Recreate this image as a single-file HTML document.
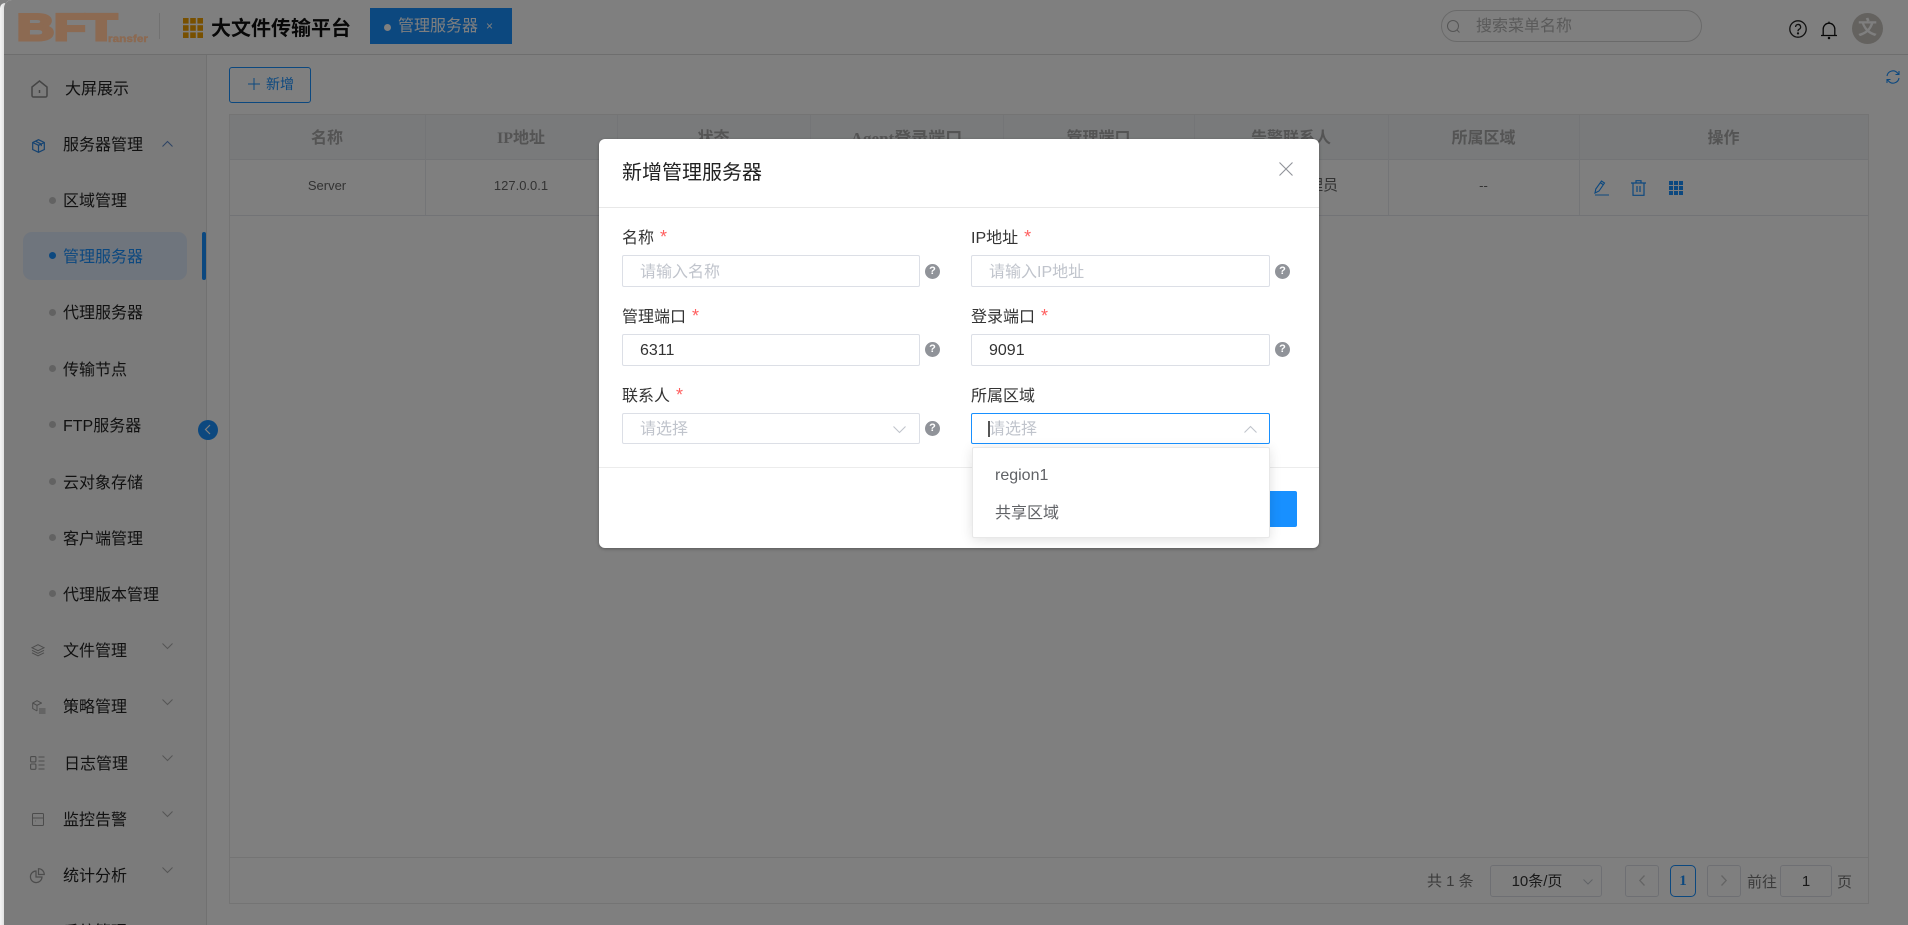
<!DOCTYPE html>
<html><head><meta charset="utf-8"><style>
*{box-sizing:border-box}
html,body{margin:0;padding:0;width:1908px;height:925px;overflow:hidden;background:#808080}
body{font-family:"Liberation Sans","Noto Sans CJK SC",sans-serif;position:relative}
.a{position:absolute;white-space:nowrap}
#app{position:absolute;left:4px;top:0;width:1904px;height:925px;overflow:hidden;background:#fff;border-top-left-radius:8px}
#root{position:absolute;left:-4px;top:0;width:1908px;height:925px}
.m{font-size:16px;color:#222;line-height:24px;height:24px}
.d{position:absolute;left:49px;width:7px;height:7px;border-radius:50%;background:#c4c4c4}
.th{position:absolute;top:117px;height:44px;text-align:center;font:bold 16px/44px "Liberation Serif","Noto Sans CJK SC",sans-serif;color:#a9a9a9}
.v{position:absolute;width:1px;background:#e9ebee}
.td{position:absolute;top:170px;height:32px;line-height:32px;text-align:center;font-size:13px;color:#666}
.lb{position:absolute;font-size:16px;color:#333;line-height:24px;height:24px;white-space:nowrap}
.lb i{font-style:normal;color:#ff5f5f;font-size:18px;margin-left:6px}
.in{position:absolute;width:298px;height:32px;border:1px solid #dcdfe6;border-radius:2px;background:#fff;font-size:16px;line-height:33px;padding-left:17px;color:#c0c4cc}
.hp{position:absolute;width:15px;height:15px;border-radius:50%;background:#909399;color:#fff;font:bold 11px/15px "Liberation Sans",sans-serif;text-align:center}
svg{position:absolute;display:block;overflow:visible}
.pg{position:absolute;top:865px;height:32px;border:1px solid #dcdfe6;border-radius:3px;background:#fff}
</style></head><body>
<div class="a" style="left:0;top:3px;width:5px;height:922px;background:linear-gradient(90deg,#f4f4f4,#dedede);border-top-left-radius:6px"></div>
<div id="app"><div id="root">

<!-- header -->
<div class="a" style="left:0;top:0;width:1908px;height:55px;background:#fff;border-bottom:1px solid #dcdcdc"></div>
<div class="a" style="left:159px;top:13px;width:1px;height:26px;background:#e2e2e2"></div>
<svg style="left:183px;top:18px" width="20" height="20" viewBox="0 0 20 20" fill="#f0a000"><rect width="5.6" height="5.6"/><rect x="7.2" width="5.6" height="5.6"/><rect x="14.4" width="5.6" height="5.6"/><rect y="7.2" width="5.6" height="5.6"/><rect x="7.2" y="7.2" width="5.6" height="5.6"/><rect x="14.4" y="7.2" width="5.6" height="5.6"/><rect y="14.4" width="5.6" height="5.6"/><rect x="7.2" y="14.4" width="5.6" height="5.6"/><rect x="14.4" y="14.4" width="5.6" height="5.6"/></svg>
<div class="a" style="left:211px;top:14px;font-size:20px;font-weight:bold;color:#111;line-height:30px">大文件传输平台</div>
<div class="a" style="left:370px;top:8px;width:142px;height:36px;background:#1890ff"></div>
<div class="a" style="left:384px;top:24px;width:7px;height:7px;border-radius:50%;background:#fff"></div>
<div class="a" style="left:398px;top:15px;font-size:16px;color:#fff;line-height:24px">管理服务器</div>
<div class="a" style="left:486px;top:16px;font-size:12px;color:#fff;line-height:20px">×</div>

<div class="a" style="left:1441px;top:10px;width:261px;height:32px;border:1px solid #d4d4d4;border-radius:16px;background:#fff"></div>
<svg style="left:1447px;top:20px" width="13" height="13" viewBox="0 0 13 13" fill="none" stroke="#aaa" stroke-width="1"><circle cx="6" cy="6" r="5.5"/><path d="M10 10l2.5 2.5"/></svg>
<div class="a" style="left:1476px;top:15px;font-size:16px;color:#b4b4b4;line-height:24px">搜索菜单名称</div>
<svg style="left:1789px;top:20px" width="18" height="18" viewBox="0 0 18 18" fill="none" stroke="#222" stroke-width="1.3"><circle cx="9" cy="9" r="8.2"/><path d="M6.6 7a2.5 2.5 0 1 1 3.6 2.2c-.9.5-1.2 1-1.2 2"/><circle cx="9" cy="13.4" r=".5" fill="#222"/></svg>
<svg style="left:1820px;top:21px" width="18" height="18" viewBox="0 0 18 18" fill="none" stroke="#111" stroke-width="1.3"><path d="M1 14.5h16M3.2 14.5V8a5.8 5.8 0 0 1 11.6 0v6.5M9 .6v1.6"/><circle cx="9" cy="17" r=".6" fill="#111"/></svg>
<div class="a" style="left:1852px;top:13px;width:31px;height:31px;border-radius:50%;background:#c8c4be;color:#fff;font-size:19px;font-weight:bold;text-align:center;line-height:31px">文</div>

<!-- sidebar -->
<div class="a" style="left:0;top:55px;width:207px;height:870px;background:#f6f6f6;border-right:1px solid #e2e2e2"></div>
<div class="a" style="left:23px;top:232px;width:164px;height:48px;border-radius:9px;background:#dfeafa"></div>
<div class="a" style="left:202px;top:232px;width:4px;height:48px;border-radius:2px;background:#1890ff"></div>

<svg style="left:31px;top:80px" width="17" height="18" viewBox="0 0 17 18" fill="none" stroke="#8a8a8a" stroke-width="1.5"><path d="M1 7l7.5-6L16 7v8.5a1.5 1.5 0 0 1-1.5 1.5h-12A1.5 1.5 0 0 1 1 15.500z"/><path d="M8.500 10v3"/></svg>
<div class="a m" style="left:65px;top:78px">大屏展示</div>
<svg style="left:32px;top:139px" width="13" height="14" viewBox="0 0 13 14" fill="none" stroke="#2a85e0" stroke-width="1.2"><path d="M6.500.7l5.800 2.800v7l-5.800 2.800-5.800-2.800v-7zM.7 3.500l5.800 2.800 5.800-2.800M6.500 6.300v7.500M3.500 2.200l5.800 2.900v2"/></svg>
<div class="a m" style="left:63px;top:134px">服务器管理</div>
<svg style="left:162px;top:141px" width="11" height="6" viewBox="0 0 11 6" fill="none" stroke="#5a86c8" stroke-width="1"><path d="M.5 5.500l5-5 5 5"/></svg>

<div class="d" style="top:197px"></div><div class="a m" style="left:63px;top:190px">区域管理</div>
<div class="d" style="top:252px;background:#1890ff"></div><div class="a m" style="left:63px;top:246px;color:#1890ff">管理服务器</div>
<div class="d" style="top:309px"></div><div class="a m" style="left:63px;top:302px">代理服务器</div>
<div class="d" style="top:365px"></div><div class="a m" style="left:63px;top:359px">传输节点</div>
<div class="d" style="top:421px"></div><div class="a m" style="left:63px;top:415px">FTP服务器</div>
<div class="d" style="top:478px"></div><div class="a m" style="left:63px;top:472px">云对象存储</div>
<div class="d" style="top:534px"></div><div class="a m" style="left:63px;top:528px">客户端管理</div>
<div class="d" style="top:590px"></div><div class="a m" style="left:63px;top:584px">代理版本管理</div>

<svg style="left:31px;top:644px" width="14" height="13" viewBox="0 0 14 13" fill="none" stroke="#999" stroke-width="1"><path d="M7 .7l6 3-6 3-6-3zM1 6.300l6 3 6-3M1 8.800l6 3 6-3"/></svg>
<div class="a m" style="left:63px;top:640px">文件管理</div>
<svg style="left:32px;top:700px" width="14" height="14" viewBox="0 0 14 14" fill="none" stroke="#999" stroke-width="1"><path d="M9.500 3.500V3L5 .7.700 3v5.500L5 11M.7 3L5 5.300 9.500 3M5 5.300V11M7 9h6.500M7 11h6.500M7 13h6.500"/></svg>
<div class="a m" style="left:63px;top:696px">策略管理</div>
<svg style="left:30px;top:756px" width="15" height="14" viewBox="0 0 15 14" fill="none" stroke="#999" stroke-width="1.1"><rect x=".6" y=".6" width="5.300" height="5.300" rx="1"/><rect x=".6" y="8" width="5.300" height="5.300" rx="1"/><path d="M8.500 1h6M8.500 5h6M8.500 9h6M8.500 13h6"/></svg>
<div class="a m" style="left:64px;top:753px">日志管理</div>
<svg style="left:32px;top:813px" width="12" height="13" viewBox="0 0 12 13" fill="none" stroke="#999" stroke-width="1"><rect x=".5" y=".5" width="11" height="12" rx="1"/><path d="M.5 5h11M3 8h.5"/></svg>
<div class="a m" style="left:63px;top:809px">监控告警</div>
<svg style="left:30px;top:868px" width="15" height="15" viewBox="0 0 15 15" fill="none" stroke="#999" stroke-width="1.200"><path d="M6 3a5.800 5.800 0 1 0 6 6H6z"/><path d="M8.500.7a5.800 5.800 0 0 1 5.800 5.800H8.500z"/></svg>
<div class="a m" style="left:63px;top:865px">统计分析</div>
<div class="a m" style="left:63px;top:921px">系统管理</div>
<svg style="left:162px;top:643px" width="11" height="6" viewBox="0 0 11 6" fill="none" stroke="#aaa" stroke-width="1"><path d="M.5.500l5 5 5-5"/></svg>
<svg style="left:162px;top:699px" width="11" height="6" viewBox="0 0 11 6" fill="none" stroke="#aaa" stroke-width="1"><path d="M.5.500l5 5 5-5"/></svg>
<svg style="left:162px;top:755px" width="11" height="6" viewBox="0 0 11 6" fill="none" stroke="#aaa" stroke-width="1"><path d="M.5.500l5 5 5-5"/></svg>
<svg style="left:162px;top:811px" width="11" height="6" viewBox="0 0 11 6" fill="none" stroke="#aaa" stroke-width="1"><path d="M.5.500l5 5 5-5"/></svg>
<svg style="left:162px;top:867px" width="11" height="6" viewBox="0 0 11 6" fill="none" stroke="#aaa" stroke-width="1"><path d="M.5.500l5 5 5-5"/></svg>
<div class="a" style="left:198px;top:420px;width:20px;height:20px;border-radius:50%;background:#1890ff"></div>
<svg style="left:204px;top:424px" width="7" height="11" viewBox="0 0 7 11" fill="none" stroke="#fff" stroke-width="1.200"><path d="M6 1L1.500 5.500 6 10"/></svg>

<!-- toolbar -->
<div class="a" style="left:229px;top:67px;width:82px;height:36px;border:1px solid #1890ff;border-radius:3px;background:#fff"></div>
<svg style="left:248px;top:78px" width="12" height="12" viewBox="0 0 12 12" stroke="#1890ff" stroke-width="1"><path d="M6 0v12M0 6h12"/></svg>
<div class="a" style="left:266px;top:74px;font-size:14px;color:#1890ff;line-height:20px">新增</div>
<svg style="left:1886px;top:70px" width="14" height="14" viewBox="0 0 14 14" fill="none" stroke="#1890ff" stroke-width="1.100"><path d="M1 6a6 6 0 0 1 10.500-3l1.500 1.500M13 1v3.500H9.500M13 8a6 6 0 0 1-10.500 3L1 9.500M1 13V9.500h3.500"/></svg>

<!-- table -->
<div class="a" style="left:229px;top:114px;width:1640px;height:790px;border:1px solid #e8e8e8;background:#fff"></div>
<div class="a" style="left:230px;top:115px;width:1638px;height:45px;background:#f2f4f7;border-bottom:1px solid #e6e8ec"></div>
<div class="a" style="left:230px;top:215px;width:1638px;height:1px;background:#e4e7ec"></div>
<div class="v" style="left:425px;top:115px;height:100px"></div>
<div class="v" style="left:617px;top:115px;height:100px"></div>
<div class="v" style="left:810px;top:115px;height:100px"></div>
<div class="v" style="left:1003px;top:115px;height:100px"></div>
<div class="v" style="left:1194px;top:115px;height:100px"></div>
<div class="v" style="left:1388px;top:115px;height:100px"></div>
<div class="v" style="left:1579px;top:115px;height:100px"></div>
<div class="th" style="left:229px;width:196px">名称</div>
<div class="th" style="left:425px;width:192px">IP地址</div>
<div class="th" style="left:617px;width:193px">状态</div>
<div class="th" style="left:810px;width:193px;font-size:17px">Agent登录端口</div>
<div class="th" style="left:1003px;width:191px">管理端口</div>
<div class="th" style="left:1194px;width:194px">告警联系人</div>
<div class="th" style="left:1388px;width:191px">所属区域</div>
<div class="th" style="left:1579px;width:289px">操作</div>
<div class="td" style="left:229px;width:196px">Server</div>
<div class="td" style="left:425px;width:192px">127.0.0.1</div>
<div class="td" style="left:1240px;width:98px;text-align:right;font-size:15px">系统管理员</div>
<div class="td" style="left:1388px;width:191px">--</div>
<svg style="left:1594px;top:180px" width="16" height="16" viewBox="0 0 16 16" fill="none" stroke="#1890ff" stroke-width="1.100"><path d="M1 13l.8-4L7.500 1l3 2-5.500 8zM1 15h14M6 2.500l3 2"/></svg>
<svg style="left:1631px;top:180px" width="15" height="16" viewBox="0 0 15 16" fill="none" stroke="#1890ff" stroke-width="1.200"><path d="M0 3h15M5 3V.7h5V3M2 3v12.300h11V3M6 6v6M9 6v6"/></svg>
<svg style="left:1669px;top:181px" width="14" height="14" viewBox="0 0 14 14" fill="#1890ff"><rect width="4" height="4"/><rect x="5" width="4" height="4"/><rect x="10" width="4" height="4"/><rect y="5" width="4" height="4"/><rect x="5" y="5" width="4" height="4"/><rect x="10" y="5" width="4" height="4"/><rect y="10" width="4" height="4"/><rect x="5" y="10" width="4" height="4"/><rect x="10" y="10" width="4" height="4"/></svg>

<!-- pagination -->
<div class="a" style="left:230px;top:857px;width:1638px;height:1px;background:#e8e8e8"></div>
<div class="a" style="left:1427px;top:871px;font-size:15px;color:#777;line-height:22px">共 1 条</div>
<div class="pg" style="left:1490px;width:112px"></div>
<div class="a" style="left:1490px;top:871px;width:94px;text-align:center;font-size:15px;color:#333;line-height:22px">10条/页</div>
<svg style="left:1583px;top:879px" width="10" height="6" viewBox="0 0 10 6" fill="none" stroke="#c0c4cc"><path d="M.5.500L5 5 9.500.500"/></svg>
<div class="pg" style="left:1625px;width:34px"></div>
<svg style="left:1639px;top:875px" width="6" height="11" viewBox="0 0 6 11" fill="none" stroke="#c8c8c8" stroke-width="1.300"><path d="M5.500.5L.8 5.500l4.700 5"/></svg>
<div class="pg" style="left:1670px;width:26px;border-color:#1890ff;border-radius:5px;color:#1890ff;font:bold 15px/30px 'Liberation Serif',serif;text-align:center">1</div>
<div class="pg" style="left:1707px;width:34px"></div>
<svg style="left:1721px;top:875px" width="6" height="11" viewBox="0 0 6 11" fill="none" stroke="#c8c8c8" stroke-width="1.300"><path d="M.5.500l4.700 5-4.700 5"/></svg>
<div class="a" style="left:1747px;top:872px;font-size:15px;color:#777;line-height:22px">前往</div>
<div class="pg" style="left:1780px;width:52px;text-align:center;font-size:15px;line-height:31px;color:#333">1</div>
<div class="a" style="left:1837px;top:872px;font-size:15px;color:#777;line-height:22px">页</div>

</div></div>

<!-- mask -->
<div class="a" style="left:4px;top:0;width:1904px;height:925px;background:rgba(0,0,0,.5);border-top-left-radius:8px"></div>

<!-- logo over mask -->
<svg style="left:0;top:0" width="160" height="50" viewBox="0 0 160 50">
<text x="17" y="40" font-family="Liberation Sans" font-weight="bold" font-size="37" fill="#8c6a52" stroke="#8c6a52" stroke-width="3" stroke-linejoin="miter" textLength="100" lengthAdjust="spacingAndGlyphs">BFT</text>
<text x="108" y="42" font-family="Liberation Sans" font-weight="bold" font-size="10" fill="#8c6a52" stroke="#8c6a52" stroke-width=".4" textLength="40" lengthAdjust="spacingAndGlyphs">ransfer</text>
</svg>

<!-- dialog -->
<div class="a" style="left:599px;top:139px;width:720px;height:409px;background:#fff;border-radius:6px;box-shadow:0 1px 3px rgba(0,0,0,.3)"></div>
<div class="a" style="left:622px;top:158px;font-size:20px;color:#222;line-height:30px">新增管理服务器</div>
<svg style="left:1279px;top:162px" width="14" height="14" viewBox="0 0 14 14" stroke="#909399" stroke-width="1.100"><path d="M.5.500l13 13M13.500.5l-13 13"/></svg>
<div class="a" style="left:599px;top:207px;width:720px;height:1px;background:#e8e8e8"></div>

<div class="lb" style="left:622px;top:225px">名称<i>*</i></div>
<div class="in" style="left:622px;top:255px">请输入名称</div>
<div class="hp" style="left:925px;top:264px">?</div>
<div class="lb" style="left:971px;top:225px">IP地址<i>*</i></div>
<div class="in" style="left:971px;top:255px;width:299px">请输入IP地址</div>
<div class="hp" style="left:1275px;top:264px">?</div>

<div class="lb" style="left:622px;top:304px">管理端口<i>*</i></div>
<div class="in" style="left:622px;top:334px;color:#333;line-height:32px">6311</div>
<div class="hp" style="left:925px;top:342px">?</div>
<div class="lb" style="left:971px;top:304px">登录端口<i>*</i></div>
<div class="in" style="left:971px;top:334px;width:299px;color:#333;line-height:32px">9091</div>
<div class="hp" style="left:1275px;top:342px">?</div>

<div class="lb" style="left:622px;top:383px">联系人<i>*</i></div>
<div class="in" style="left:622px;top:413px;height:31px;line-height:31px">请选择</div>
<svg style="left:893px;top:426px" width="13" height="7" viewBox="0 0 13 7" fill="none" stroke="#c0c4cc" stroke-width="1.100"><path d="M.5.500l6 6 6-6"/></svg>
<div class="hp" style="left:925px;top:421px">?</div>
<div class="lb" style="left:971px;top:385px">所属区域</div>
<div class="in" style="left:971px;top:413px;width:299px;height:31px;line-height:31px;border-color:#1890ff">请选择</div>
<div class="a" style="left:988px;top:421px;width:2px;height:16px;background:#555"></div>
<svg style="left:1244px;top:426px" width="13" height="7" viewBox="0 0 13 7" fill="none" stroke="#c0c4cc" stroke-width="1.100"><path d="M.5 6.500l6-6 6 6"/></svg>

<div class="a" style="left:599px;top:467px;width:720px;height:1px;background:#ececec"></div>
<div class="a" style="left:1240px;top:491px;width:57px;height:36px;background:#1890ff;border-radius:2px"></div>

<div class="a" style="left:972px;top:447px;width:298px;height:91px;background:#fff;border:1px solid #e8e8e8;border-radius:2px;box-shadow:0 2px 12px rgba(0,0,0,.12)"></div>
<div class="a" style="left:995px;top:464px;font-size:16px;color:#606266;line-height:24px">region1</div>
<div class="a" style="left:995px;top:502px;font-size:16px;color:#606266;line-height:24px">共享区域</div>
</body></html>
